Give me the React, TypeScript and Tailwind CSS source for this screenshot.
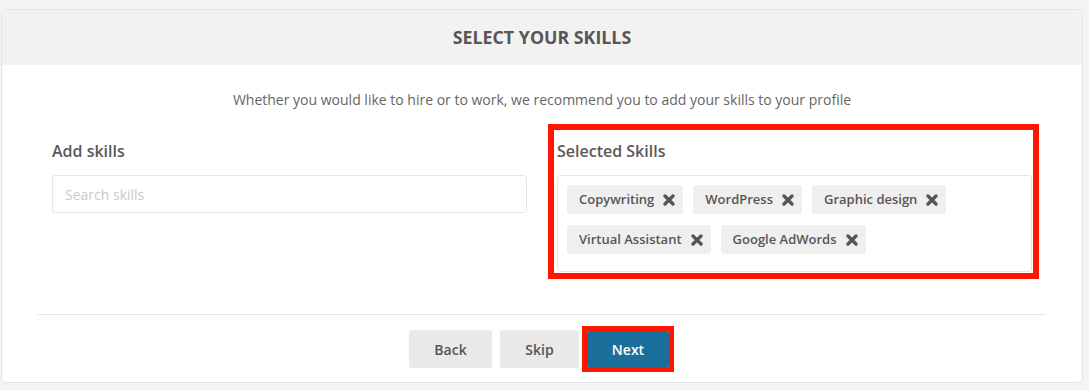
import React from 'react';

const skills = [
  'Copywriting',
  'WordPress',
  'Graphic design',
  'Virtual Assistant',
  'Google AdWords',
];

const RemoveIcon = () => (
  <svg width="12" height="12" viewBox="0 0 12 12" className="shrink-0">
    <path
      d="M2 2 L10 10 M10 2 L2 10"
      stroke="#555555"
      strokeWidth="3.3"
      strokeLinecap="round"
    />
  </svg>
);

const SkillTag = ({ label }: { label: string }) => (
  <span className="flex h-[29px] items-center gap-[9px] rounded-[3px] bg-[#efefef] pl-[12px] pr-[8px] text-[13px] font-semibold text-[#5a5555]">
    {label}
    <RemoveIcon />
  </span>
);

export default function App() {
  return (
    <div
      className="min-h-[390px] bg-[#f4f4f4] pt-[9px] pl-[1px]"
      style={{ fontFamily: '"Open Sans", "Noto Sans", sans-serif' }}
    >
      <div className="w-[1082px] overflow-hidden rounded-[5px] border border-[#e4e4e4] bg-white">
        <div className="flex h-[55px] items-center justify-center bg-[#f2f2f2]">
          <h1 className="text-[17.8px] font-bold text-[#5a5555]">
            SELECT YOUR SKILLS
          </h1>
        </div>

        <p className="pt-[25px] text-center text-[14px] leading-[20px] text-[#666666]">
          Whether you would like to hire or to work, we recommend you to add your skills to your profile
        </p>

        <div className="mt-[27px] flex gap-[30px] px-[50px]">
          <div className="flex-1">
            <h2 className="mb-[12px] pt-[2px] text-[16px] font-semibold leading-[24px] text-[#5c5757]">
              Add skills
            </h2>
            <input
              placeholder="Search skills"
              className="h-[38px] w-full rounded-[3px] border border-[#e6e6e6] px-[12px] text-[14px] text-[#555] outline-none placeholder:text-[#c9c9c9]"
            />
          </div>

          <div className="relative flex-1">
            <h2 className="mb-[12px] pt-[2px] text-[16px] font-semibold leading-[24px] text-[#5c5757]">
              Selected Skills
            </h2>
            <div className="flex flex-wrap gap-x-[10px] gap-y-[11px] rounded-[3px] border border-[#e6e6e6] px-[9px] pt-[9px] pb-[17px]">
              {skills.map((s) => (
                <SkillTag key={s} label={s} />
              ))}
            </div>
            <div className="pointer-events-none absolute -top-[13px] -right-[7px] -bottom-[7px] -left-[9px] border-[6px] border-[#ff1500]" />
          </div>
        </div>

        <div className="mx-[36px] mt-[42px] border-t border-[#e6e6e6]" />

        <div className="flex justify-center gap-[8px] pt-[15px] pr-[6px] pb-[14px]">
          <button className="h-[38px] w-[83px] rounded-[3px] bg-[#e9e9e9] text-[14px] font-semibold text-[#555]">
            Back
          </button>
          <button className="h-[38px] w-[79px] rounded-[3px] bg-[#e9e9e9] text-[14px] font-semibold text-[#555]">
            Skip
          </button>
          <div className="relative">
            <button className="h-[38px] w-[82px] rounded-[3px] bg-[#1a6f9b] text-[14px] font-semibold text-white">
              Next
            </button>
            <div className="pointer-events-none absolute -top-[4px] -right-[5px] -bottom-[4px] -left-[5px] border-[5px] border-[#ff1500]" />
          </div>
        </div>
      </div>
    </div>
  );
}
